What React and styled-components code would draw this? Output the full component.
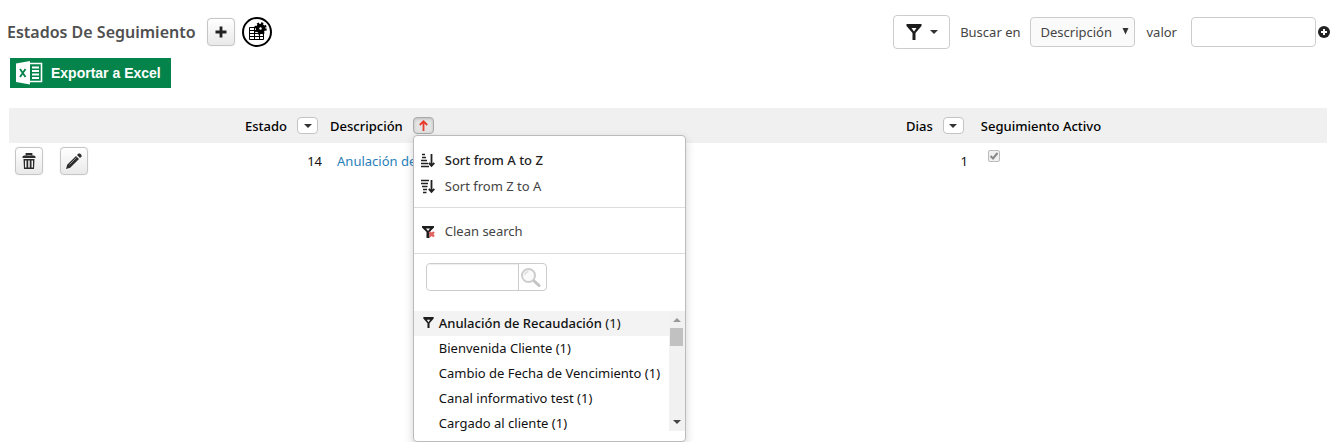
import React from "react";
import styled, { createGlobalStyle, css } from "styled-components";

const GlobalStyle = createGlobalStyle`
  * { box-sizing: border-box; }
  body {
    margin: 0;
    background: #fff;
    color: #111;
    font: 13px/20px "Noto Sans", "Trebuchet MS", sans-serif;
  }
  button, input, select { font: inherit; color: inherit; }
`;

const Page = styled.main`
  min-height: 100vh;
  padding: 15px 3px 0 7px;
`;

const TopBar = styled.header`
  display: flex;
  align-items: center;
  justify-content: space-between;
  height: 34px;
`;

const TitleGroup = styled.div`
  display: flex;
  align-items: center;
  gap: 7px;
`;

const Title = styled.h1`
  margin: 0 4px 0 0;
  font-size: 16px;
  line-height: 24px;
  font-weight: 600;
  color: #505050;
  white-space: nowrap;
`;

const ToolButton = styled.button`
  display: flex;
  align-items: center;
  justify-content: center;
  width: 28px;
  height: 28px;
  padding: 0;
  border: 1px solid #c6c6c6;
  border-radius: 4px;
  background: linear-gradient(#fff, #e9e9e9);
  box-shadow: 0 0 1px #ccc;
`;

const RoundButton = styled.button`
  display: flex;
  align-items: center;
  justify-content: center;
  width: 30px;
  height: 30px;
  padding: 0;
  border: 2px solid #000;
  border-radius: 50%;
  background: #fff;
`;

const SearchForm = styled.form`
  display: flex;
  align-items: center;
  color: #444;
`;

const FilterButton = styled.button`
  display: flex;
  align-items: center;
  justify-content: center;
  gap: 8px;
  width: 57px;
  height: 34px;
  margin-right: 10px;
  padding: 0;
  border: 1px solid #ccc;
  border-radius: 4px;
  background: #fff;
`;

const SelectBox = styled.span`
  position: relative;
  margin: 0 12px 0 9px;
  svg {
    position: absolute;
    right: 6px;
    top: 11px;
    pointer-events: none;
  }
`;

const Select = styled.select`
  display: block;
  appearance: none;
  width: 105px;
  height: 30px;
  padding: 0 10px;
  border: 1px solid #ccc;
  border-radius: 4px;
  background: #fafafa;
`;

const TextInput = styled.input`
  width: 125px;
  height: 30px;
  margin-left: 14px;
  border: 1px solid #ccc;
  border-radius: 4px;
  background: #fff;
`;

const AddButton = styled.button`
  display: flex;
  margin-left: 2px;
  padding: 0;
  border: 0;
  background: none;
`;

const ExcelButton = styled.button`
  display: flex;
  align-items: center;
  gap: 8px;
  width: 161px;
  height: 30px;
  margin: 9px 0 20px 3px;
  padding: 0 0 0 6px;
  border: 0;
  background: #04844a;
  color: #fff;
  font: bold 14px/20px "Liberation Sans", Arial, sans-serif;
  white-space: nowrap;
`;

const TableArea = styled.div`
  padding: 0 3px 0 2px;
`;

const Table = styled.table`
  width: 100%;
  table-layout: fixed;
  border-collapse: collapse;
`;

const Column = styled.col`
  width: ${(p) => p.$width};
`;

const HeadCell = styled.th`
  height: 35px;
  padding: 0 ${(p) => (p.$wide ? "11px" : "6px")};
  background: #f0f0f0;
  color: #000;
  font-weight: 500;
  text-align: left;
`;

const HeadContent = styled.div`
  position: relative;
  display: flex;
  align-items: center;
  justify-content: ${(p) => (p.$end ? "flex-end" : "flex-start")};
  gap: 10px;
`;

const Cell = styled.td`
  height: 35px;
  padding: ${(p) => (p.$wide ? "0 13px" : "0 2px")};
  text-align: ${(p) => (p.$end ? "right" : "left")};
  white-space: nowrap;
`;

const RowActions = styled.div`
  display: flex;
  gap: 17px;
  padding: 0 4px;
`;

const Link = styled.a`
  color: #2980b9;
  text-decoration: none;
`;

const SortButton = styled.button`
  display: flex;
  align-items: center;
  justify-content: center;
  width: 21px;
  height: 17px;
  padding: 0;
  border: 1px solid #c4c4c4;
  border-radius: 4px;
  background: #fff;
  ${(p) =>
    p.$active &&
    css`
      border-color: #aaa;
      background: #e4e4e4;
      box-shadow: inset 0 1px 3px #bbb;
    `}
`;

const MenuAnchor = styled.div`
  position: relative;
`;

const Menu = styled.div`
  position: absolute;
  z-index: 2;
  top: 18px;
  left: 0;
  width: 273px;
  padding: 11px 0 10px;
  border: 1px solid #bbb;
  border-radius: 4px;
  background: #fff;
  box-shadow: 0 4px 10px rgba(0, 0, 0, 0.18);
  font-weight: 400;
`;

const MenuItem = styled.button`
  display: flex;
  align-items: center;
  gap: 9px;
  width: 100%;
  height: 26px;
  padding: 0 6px 1px;
  border: 0;
  background: none;
  color: ${(p) => (p.$active ? "#222" : "#444")};
  font-weight: ${(p) => (p.$active ? 500 : 400)};
`;

const MenuSection = styled.div`
  padding: ${(p) => (p.$first ? "0 0 8px" : "10px 0 9px")};
  border-bottom: 1px solid #ddd;
`;

const MenuSearch = styled.form`
  display: flex;
  width: 121px;
  height: 28px;
  margin: 9px 12px 20px;
  border: 1px solid #ccc;
  border-radius: 4px;
`;

const MenuSearchInput = styled.input`
  flex: 1;
  min-width: 0;
  border: 0;
  border-right: 1px solid #ccc;
  border-radius: 4px 0 0 4px;
  box-shadow: inset 0 1px 1px #eee;
`;

const MenuSearchButton = styled.button`
  width: 27px;
  padding: 2px 1px;
  border: 0;
  background: none;
  svg { display: block; }
`;

const ListFrame = styled.div`
  display: flex;
  height: 120px;
`;

const OptionList = styled.ul`
  flex: 1;
  margin: 0;
  padding: 0;
  overflow: hidden;
  list-style: none;
`;

const Option = styled.li`
  display: flex;
  align-items: center;
  height: 25px;
  padding: 0 0 2px 9px;
  background: ${(p) => (p.$active ? "#f3f3f3" : "#fff")};
  color: #111;
  white-space: pre;
  strong { font-weight: 500; }
`;

const OptionMark = styled.span`
  display: flex;
  width: 16px;
`;

const ScrollTrack = styled.div`
  display: flex;
  flex-direction: column;
  align-items: center;
  width: 16px;
  padding: 7px 0;
  background: #f1f1f1;
`;

const ScrollThumb = styled.div`
  width: 13px;
  height: 18px;
  margin: 6px 0 auto;
  background: #c1c1c1;
`;

const Check = styled.input`
  appearance: none;
  display: block;
  width: 12px;
  height: 12px;
  margin: 0;
  border: 1px solid #bbb;
  border-radius: 2px;
  background: #f0f0f0;
`;

const CheckBox = styled.label`
  position: relative;
  display: block;
  width: 12px;
  margin: 0 0 9px 5px;
  svg {
    position: absolute;
    left: 1px;
    top: 1px;
  }
`;

const Caret = ({ size = 8, color = "#333", up }) => (
  <svg width={size} height="4" viewBox="0 0 8 4" aria-hidden="true">
    <path d={up ? "M0 4L4 0L8 4Z" : "M0 0H8L4 4Z"} fill={color} />
  </svg>
);

const Funnel = ({ size = 16 }) => (
  <svg width={size} height={size} viewBox="0 0 16 16" aria-hidden="true">
    <path
      d="M0.500 0H15.500V2L9.500 9V16H6.500V9L0.500 2ZM5.500 4L8 7.500L10.500 4Z"
      fill="#1c1c1c"
      fillRule="evenodd"
    />
  </svg>
);

const ClearFunnel = () => (
  <svg width="16" height="16" viewBox="0 0 16 16" aria-hidden="true">
    <path
      d="M2 3H14V4.500L9.500 9V15H6.500V9L2 4.500ZM6 5.500L8 8L10 5.500Z"
      fill="#1c1c1c"
      fillRule="evenodd"
    />
    <path d="M9.500 9L14 13.500M14 9L9.500 13.500" stroke="#e0605c" strokeWidth="2.400" />
  </svg>
);

const SortGlyph = ({ down }) => (
  <svg width="16" height="16" viewBox="0 0 16 16" fill="none" stroke="#222" aria-hidden="true">
    <path
      d={
        down
          ? "M1 2.500H9M1 5.500H8M2 8.500H7.500M3 11.500H7M3 14.500H6.500"
          : "M2 2.500H5M2 5.500H6M1 8.500H7M1 11.500H8M1 14.500H9"
      }
      strokeWidth="1.700"
    />
    <path d="M11.500 2V13.500M8.800 10.800L11.500 13.800L14.300 10.800" strokeWidth="1.800" />
  </svg>
);

const PlusGlyph = () => (
  <svg width="12" height="12" viewBox="0 0 12 12" aria-hidden="true">
    <path d="M6 0.500V11.500M0.500 6H11.500" stroke="#222" strokeWidth="2.800" />
  </svg>
);

const TableGear = () => (
  <svg width="20" height="20" viewBox="0 0 20 20" aria-hidden="true">
    <path
      d="M2.500 5.500H16.500V17.500H2.500ZM2.500 8.500H16.500M2.500 11.500H16.500M2.500 14.500H16.500M7.500 5.500V17.500M12.500 5.500V17.500"
      fill="#fff"
      stroke="#000"
      strokeWidth="1"
    />
    <circle cx="13.500" cy="6.500" r="4.800" fill="#000" />
    <circle cx="13.500" cy="6.500" r="5" fill="none" stroke="#000" strokeWidth="2.500" strokeDasharray="2 1.927" />
    <circle cx="13.500" cy="6.500" r="1.200" fill="#fff" />
  </svg>
);

const ExcelLogo = () => (
  <svg width="27" height="24" viewBox="0 0 27 24" aria-hidden="true">
    <path d="M13 2.500H25.500V20.500H13" fill="none" stroke="#fff" strokeWidth="1.600" />
    <path d="M16 6.500H23M16 10H23M16 13.500H23M16 17H23" stroke="#fff" strokeWidth="1.800" />
    <path d="M0 2.500L14 0V23.500L0 21Z" fill="#fff" />
    <path d="M4 8L9.500 16M9.500 8L4 16" stroke="#04844a" strokeWidth="1.800" />
  </svg>
);

const Trash = () => (
  <svg width="14" height="16" viewBox="0 0 14 16" aria-hidden="true">
    <path d="M4.500 2.500V1H9.500V2.500" fill="none" stroke="#2b2b2b" strokeWidth="1.800" />
    <path d="M0.500 5V3.500L2 2.500H12L13.500 3.500V5Z" fill="#2b2b2b" />
    <path d="M1.500 6H12.500L12 16H2ZM3 7.500V14.500H4.500V7.500ZM6.200 7.500V14.500H7.800V7.500ZM9.500 7.500V14.500H11V7.500Z" fill="#2b2b2b" fillRule="evenodd" />
  </svg>
);

const Pencil = () => (
  <svg width="16" height="16" viewBox="0 0 16 16" aria-hidden="true">
    <path d="M0 16L1.200 11.800L10 3L13 6L4.200 14.800Z" fill="#2b2b2b" />
    <path d="M11 2L12.500 0.500H14L15.500 2V3.500L14 5Z" fill="#2b2b2b" />
    <path d="M3.500 11.500L10.500 4.500" stroke="#aaa" strokeWidth="0.800" />
  </svg>
);

const RedArrow = () => (
  <svg width="9" height="11" viewBox="0 0 9 11" fill="none" stroke="#e8392b" strokeWidth="1.800" aria-hidden="true">
    <path d="M4.500 11V1.500M0.800 5L4.500 1.300L8.200 5" />
  </svg>
);

const Magnifier = () => (
  <svg width="21" height="21" viewBox="0 0 21 21" fill="none" aria-hidden="true">
    <path d="M13 13L19 18.500" stroke="#c4c4c4" strokeWidth="3" strokeLinecap="round" />
    <circle cx="8.500" cy="8.500" r="6.500" fill="#fafafa" stroke="#cdcdcd" strokeWidth="2" />
    <path d="M5 8A4 4 0 0 1 8.500 4.500" stroke="#ddd" strokeWidth="1.500" />
  </svg>
);

const options = [
  "Bienvenida Cliente",
  "Cambio de Fecha de Vencimiento",
  "Canal informativo test",
  "Cargado al cliente",
];

const DescriptionMenu = () => (
  <Menu>
    <MenuSection $first>
      <MenuItem type="button" $active><SortGlyph />Sort from A to Z</MenuItem>
      <MenuItem type="button"><SortGlyph down />Sort from Z to A</MenuItem>
    </MenuSection>
    <MenuSection>
      <MenuItem type="button"><ClearFunnel />Clean search</MenuItem>
    </MenuSection>
    <MenuSearch>
      <MenuSearchInput type="text" aria-label="Search" />
      <MenuSearchButton type="button" aria-label="Search"><Magnifier /></MenuSearchButton>
    </MenuSearch>
    <ListFrame>
      <OptionList>
        <Option $active>
          <OptionMark><Funnel size={11} /></OptionMark>
          <strong>Anulación de Recaudación</strong> (1)
        </Option>
        {options.map((name) => (
          <Option key={name}><OptionMark />{name} (1)</Option>
        ))}
      </OptionList>
      <ScrollTrack>
        <Caret up color="#999" />
        <ScrollThumb />
        <Caret color="#444" />
      </ScrollTrack>
    </ListFrame>
  </Menu>
);

export default function App() {
  return (
    <>
      <GlobalStyle />
      <Page>
        <TopBar>
          <TitleGroup>
            <Title>Estados De Seguimiento</Title>
            <ToolButton type="button" aria-label="Agregar"><PlusGlyph /></ToolButton>
            <RoundButton type="button" aria-label="Configurar tabla"><TableGear /></RoundButton>
          </TitleGroup>
          <SearchForm>
            <FilterButton type="button" aria-label="Filtro"><Funnel /><Caret /></FilterButton>
            <label htmlFor="field">Buscar en</label>
            <SelectBox>
              <Select id="field" defaultValue="Descripción">
                <option>Descripción</option>
              </Select>
              <svg width="7" height="7" viewBox="0 0 7 7" aria-hidden="true">
                <path d="M0.500 0H6.500L3.500 6.500Z" fill="#333" />
              </svg>
            </SelectBox>
            <label htmlFor="value">valor</label>
            <TextInput id="value" type="text" />
            <AddButton type="button" aria-label="Agregar filtro">
              <svg width="12" height="12" viewBox="0 0 12 12" aria-hidden="true">
                <circle cx="6" cy="6" r="6" fill="#222" />
                <path d="M6 3V9M3 6H9" stroke="#fff" strokeWidth="2" />
              </svg>
            </AddButton>
          </SearchForm>
        </TopBar>
        <ExcelButton type="button"><ExcelLogo />Exportar a Excel</ExcelButton>
        <TableArea>
          <Table>
            <colgroup>
              <Column $width="91px" />
              <Column $width="17%" />
              <Column $width="38%" />
              <Column $width="11%" />
              <Column $width="auto" />
            </colgroup>
            <thead>
              <tr>
                <HeadCell aria-label="Acciones" />
                <HeadCell>
                  <HeadContent $end>
                    Estado
                    <SortButton type="button" aria-label="Ordenar Estado"><Caret /></SortButton>
                  </HeadContent>
                </HeadCell>
                <HeadCell>
                  <HeadContent>
                    Descripción
                    <MenuAnchor>
                      <SortButton type="button" $active aria-label="Ordenar Descripción"><RedArrow /></SortButton>
                      <DescriptionMenu />
                    </MenuAnchor>
                  </HeadContent>
                </HeadCell>
                <HeadCell>
                  <HeadContent $end>
                    Dias
                    <SortButton type="button" aria-label="Ordenar Dias"><Caret /></SortButton>
                  </HeadContent>
                </HeadCell>
                <HeadCell $wide>Seguimiento Activo</HeadCell>
              </tr>
            </thead>
            <tbody>
              <tr>
                <Cell>
                  <RowActions>
                    <ToolButton type="button" aria-label="Eliminar"><Trash /></ToolButton>
                    <ToolButton type="button" aria-label="Editar"><Pencil /></ToolButton>
                  </RowActions>
                </Cell>
                <Cell $end>14</Cell>
                <Cell $wide><Link href="#">Anulación de</Link></Cell>
                <Cell $end>1</Cell>
                <Cell $wide>
                  <CheckBox>
                    <Check type="checkbox" defaultChecked disabled aria-label="Seguimiento Activo" />
                    <svg width="10" height="10" viewBox="0 0 10 10" aria-hidden="true">
                      <path d="M1.500 5L4 7.500L8.500 2" fill="none" stroke="#888" strokeWidth="2" />
                    </svg>
                  </CheckBox>
                </Cell>
              </tr>
            </tbody>
          </Table>
        </TableArea>
      </Page>
    </>
  );
}
